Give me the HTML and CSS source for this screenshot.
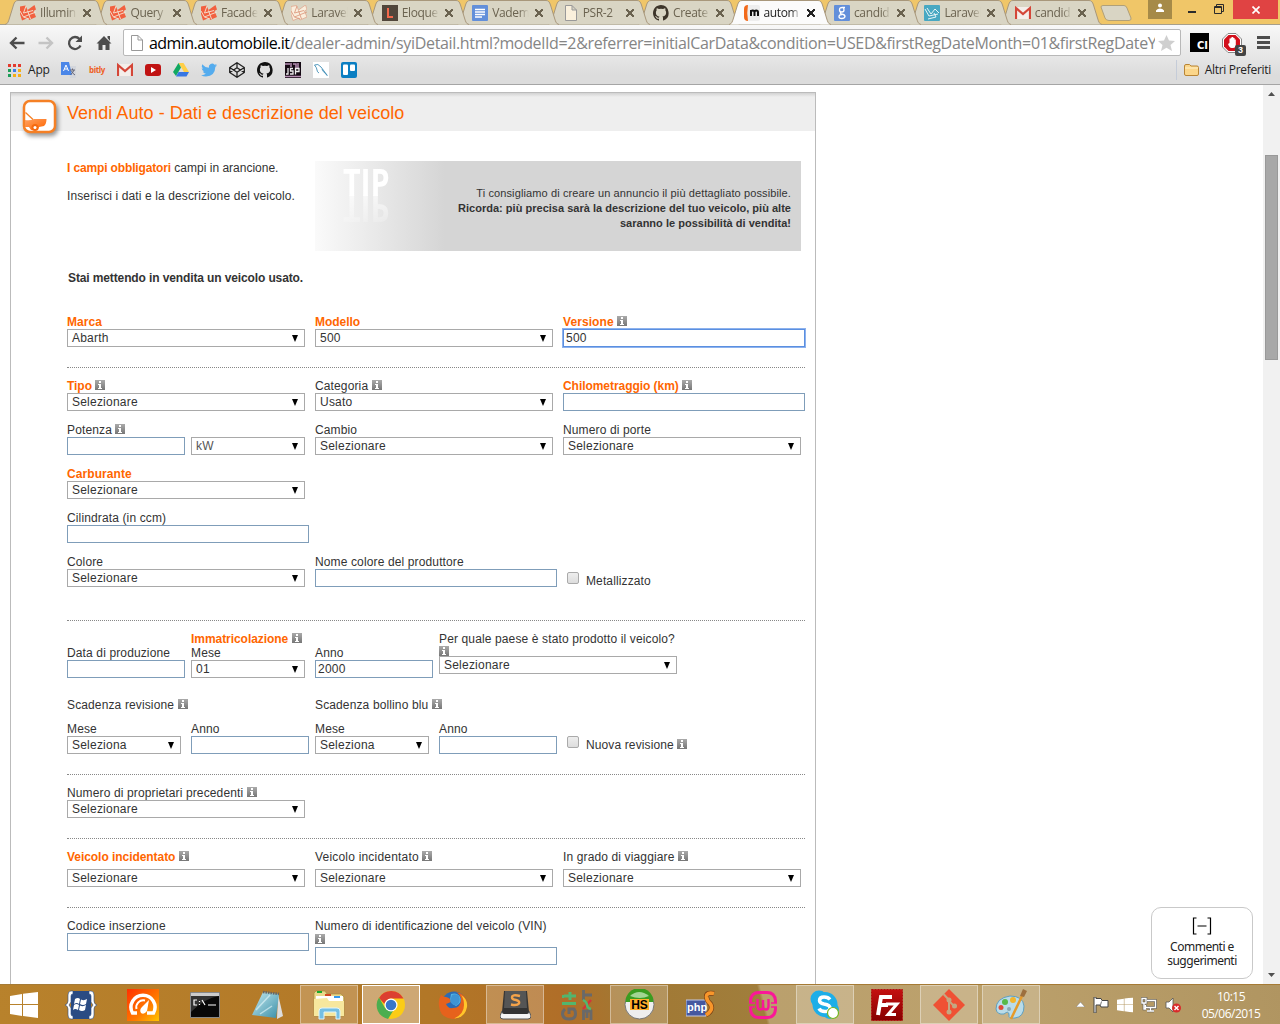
FILE: index.html
```html
<!DOCTYPE html>
<html lang="it">
<head>
<meta charset="utf-8">
<title>automobile.it - Vendi Auto</title>
<link rel="stylesheet" href="styles.css">
</head>
<body>
<svg class="defs" width="0" height="0">
  <defs>
    <linearGradient id="gi" x2="0" y2="1"><stop offset="0" stop-color="#aaa"/><stop offset="1" stop-color="#777"/></linearGradient>
    <linearGradient id="gcar" x2="1" y2="1"><stop offset="0" stop-color="#ffa060"/><stop offset="1" stop-color="#f60"/></linearGradient>
    <linearGradient id="ggauge" x2="1" y2="1"><stop offset="0" stop-color="#ff3000"/><stop offset=".6" stop-color="#ff7a00"/><stop offset="1" stop-color="#ffc400"/></linearGradient>
    <linearGradient id="gred" x2="0" y2="1"><stop offset="0" stop-color="#c41010"/><stop offset="1" stop-color="#860000"/></linearGradient>
    <linearGradient id="gnote" x2="1" y2="1"><stop offset="0" stop-color="#c5eaf0"/><stop offset="1" stop-color="#3a8fa8"/></linearGradient>
    <symbol id="tab" viewBox="0 0 102 25"><path d="M0 24.5C3 24 3.5 21 4.5 18L8.500 5C9.500 2 10.500.5 13 .5H89C91.500.5 92.500 2 93.500 5L97.500 18C98.500 21 99 24 102 24.500"/></symbol>
    <symbol id="info" viewBox="0 0 10 10"><path d="M0 0H10V10H0z" fill="url(#gi)"/><path d="M4 1H6V3H4zM3 4H6V8H7V9H3V8H4V5H3z" fill="#fff"/></symbol>
    <symbol id="laravel" viewBox="0 0 16 16"><path d="M0 1.500L5.500.500 7.500 5 14.500 0 16 4.500 13.500 6 16 12 9 15 8 13 2 15.500 0 9z" fill="currentColor"/><path d="M0 6L3.500 12 9.500 9.500 16 7M6 1L3.500 8 13 5.500M7.500 5.500L10.500 14M3.500 12L9 14" fill="none" stroke="#f4e6d6" stroke-width=".9"/></symbol>
    <symbol id="file" viewBox="0 0 12 16"><path d="M.5.5H7L11.500 5V15.500H.5zM7 .5V5H11.500" stroke="#999"/></symbol>
    <symbol id="github" viewBox="0 0 16 16"><path d="M8 0C3.600 0 0 3.600 0 8c0 3.500 2.300 6.500 5.500 7.600.4 0 .5-.2.5-.4v-1.500c-2.200.5-2.700-1-2.700-1-.4-.9-.9-1.200-.9-1.200-.7-.5.1-.5.100-.5.8.1 1.200.8 1.200.8.7 1.300 1.900.9 2.300.7.1-.5.3-.9.500-1.100-1.800-.2-3.600-.9-3.600-4 0-.9.3-1.600.8-2.100-.1-.2-.4-1 .1-2.100 0 0 .7-.2 2.200.8a7.500 7.500 0 0 1 4 0c1.500-1 2.200-.8 2.200-.8.4 1.100.2 1.900.1 2.100.5.600.8 1.300.8 2.100 0 3.100-1.900 3.700-3.700 3.900.3.300.6.800.6 1.500v2.200c0 .2.1.5.6.4A8 8 0 0 0 8 0z"/></symbol>
    <symbol id="gmail" viewBox="0 0 16 16"><path d="M0 2H16V14H0z" fill="#f4eeea"/><path d="M1 14V3L8 9 15 3V14" fill="none" stroke="#d44638" stroke-width="2.200"/></symbol>
    <symbol id="win" viewBox="0 0 28 26"><path d="M0 4L12 2V12H0zM13 1.800L28 0V12H13zM0 13H12V24L0 22zM13 13H28V26L13 24z"/></symbol>
  </defs>
</svg>

<header class="browser">
  <div class="tabstrip">
    <div class="tab t1"><svg class="shape"><use href="#tab"/></svg><svg class="fav red"><use href="#laravel"/></svg><span class="ttl">Illumin</span><i class="x"></i></div>
    <div class="tab t2"><svg class="shape"><use href="#tab"/></svg><svg class="fav red"><use href="#laravel"/></svg><span class="ttl">Query</span><i class="x"></i></div>
    <div class="tab t3"><svg class="shape"><use href="#tab"/></svg><svg class="fav red"><use href="#laravel"/></svg><span class="ttl">Facade</span><i class="x"></i></div>
    <div class="tab t4"><svg class="shape"><use href="#tab"/></svg><svg class="fav" viewBox="0 0 16 16"><path d="M0 1.500L5.500.500 7.500 5 14.500 0 16 4.500 13.500 6 16 12 9 15 8 13 2 15.500 0 9z" fill="#faeedd" stroke="#e0a78e" stroke-width=".8"/><path d="M0 6L3.500 12 9.500 9.500 16 7M6 1L3.500 8 13 5.500M7.500 5.500L10.500 14M3.500 12L9 14" fill="none" stroke="#dd9b80" stroke-width=".9"/></svg><span class="ttl">Laravel</span><i class="x"></i></div>
    <div class="tab t5"><svg class="shape"><use href="#tab"/></svg><svg class="fav" viewBox="0 0 16 16"><path d="M0 0H16V16H0z" fill="#51463b"/><path d="M6 3V12H11" fill="none" stroke="#f4694c" stroke-width="2"/></svg><span class="ttl">Eloque</span><i class="x"></i></div>
    <div class="tab t6"><svg class="shape"><use href="#tab"/></svg><svg class="fav" viewBox="0 0 16 16"><rect width="16" height="16" rx="1" fill="#628fda"/><path d="M3 4.500H13M3 7H13M3 9.500H13M3 12H10" stroke="#fff" stroke-width="1.300"/></svg><span class="ttl">Vadem</span><i class="x"></i></div>
    <div class="tab t7"><svg class="shape"><use href="#tab"/></svg><svg class="fav" fill="#faf0dc"><use href="#file"/></svg><span class="ttl">PSR-2</span><i class="x"></i></div>
    <div class="tab t8"><svg class="shape"><use href="#tab"/></svg><svg class="fav" fill="#3d352a"><use href="#github"/></svg><span class="ttl">Create</span><i class="x"></i></div>
    <div class="tab t9 active"><svg class="shape"><use href="#tab"/></svg><svg class="fav" viewBox="0 0 16 16"><rect x="3" width="13" height="16" rx="2" fill="#eee"/><path d="M4 0Q0 0 0 4V12Q0 16 4 16Q2.500 8 4 0z" fill="#f26a1b"/><path d="M7 11V5M7 7Q7 5.500 8.700 5.500 10.500 5.500 10.500 7V11M10.500 7Q10.500 5.500 12.200 5.500 14 5.500 14 7V11" fill="none" stroke="#111" stroke-width="2"/></svg><span class="ttl">autom</span><i class="x"></i></div>
    <div class="tab t10"><svg class="shape"><use href="#tab"/></svg><svg class="fav" viewBox="0 0 16 16"><rect width="16" height="16" rx="1" fill="#628fda"/><path d="M11 2.500H8.500Q5.500 2.500 5.500 5 5.500 7 7.800 7 10 7 10 5 10 3.500 9 2.600M7 7Q5.500 8.200 7.500 9 11 9.500 11 11.500 10.500 13.500 7.800 13.500 5 13.500 5 11.500 5.200 9.500 8 9.500" fill="none" stroke="#fff" stroke-width="1.300"/></svg><span class="ttl">candid</span><i class="x"></i></div>
    <div class="tab t11"><svg class="shape"><use href="#tab"/></svg><svg class="fav" viewBox="0 0 16 16"><rect width="16" height="16" rx="1" fill="#48a8c2"/><path d="M1 4L5 11 14 9M3 3L7 9 11 4 15 8M4 14L12 12 10 8" fill="none" stroke="#e8f5f8"/></svg><span class="ttl">Laravel</span><i class="x"></i></div>
    <div class="tab t12"><svg class="shape"><use href="#tab"/></svg><svg class="fav"><use href="#gmail"/></svg><span class="ttl">candid</span><i class="x"></i></div>
    <svg class="newtab" width="32" height="16" viewBox="0 0 32 16"><path d="M1 2Q1 .5 3 .5H24Q26 .5 27 3L31 13Q31.500 15.500 29 15.500H9Q6 15.500 5 13z" fill="#d9d5c4" stroke="#b0a078"/></svg>
    <div class="winbtns">
      <span class="user"><svg width="10" height="10" viewBox="0 0 10 10" fill="#fff"><circle cx="5" cy="2.500" r="2"/><path d="M1 9V7.500Q2.500 5.500 5 5.500T9 7.500V9z"/></svg></span>
      <svg class="mini" width="9" height="14"><path d="M0 11H8V13H0z" fill="#2b2b2b"/></svg>
      <svg class="rest" width="10" height="10" viewBox="0 0 10 10" fill="none" stroke="#2b2b2b"><path d="M.5 2.500H7.500V9.500H.5zM2.500 2V.5H9.500V7.500H8M.5 3.500H7.500"/></svg>
      <span class="close"><svg width="8" height="8" viewBox="0 0 8 8"><path d="M.5.5L7.500 7.500M7.500.5L.5 7.500" stroke="#fff" stroke-width="1.700"/></svg></span>
    </div>
  </div>
  <div class="toolbar">
    <svg class="nav" width="16" height="16" viewBox="0 0 16 16"><path d="M7.500 2.500L2 8 7.500 13.500M2 8H15.500" fill="none" stroke="#4d4d4d" stroke-width="2.400"/></svg>
    <svg class="nav" width="16" height="16" viewBox="0 0 16 16"><path d="M8.500 2.500L14 8 8.500 13.500M14 8H.5" fill="none" stroke="#c4c4c4" stroke-width="2.400"/></svg>
    <svg class="nav" width="16" height="16" viewBox="0 0 16 16"><path d="M13.500 10.500A6 6 0 1 1 12.500 4" fill="none" stroke="#4d4d4d" stroke-width="2.300"/><path d="M15 .5V7H8.500z" fill="#4d4d4d"/></svg>
    <svg class="nav" width="16" height="16" viewBox="0 0 16 16"><path d="M8 1L15.500 8.500H13.500V15H9.500V10H6.500V15H2.500V8.500H.5zM11.500 1H14V6L11.500 3z" fill="#4d4d4d"/></svg>
    <div class="omni"><svg width="12" height="16" fill="#fff"><use href="#file"/></svg><span class="url"><b>admin.automobile.it</b>/dealer-admin/syiDetail.html?modelId=2&amp;referrer=initialCarData&amp;condition=USED&amp;firstRegDateMonth=01&amp;firstRegDateY</span>
      <svg width="17" height="16" viewBox="0 0 17 16"><path d="M8.500 0L11 5.500 17 6 12.500 10 14 16 8.500 12.800 3 16 4.500 10 0 6 6 5.500z" fill="#cfcfcf"/></svg></div>
    <span class="ci">CI</span>
    <span class="abp"><svg width="20" height="20" viewBox="0 0 20 20"><path d="M6 .5H14L19.500 6V14L14 19.500H6L.5 14V6z" fill="#fff" stroke="#888"/><path d="M6.500 2H13.500L18 6.500V13.500L13.500 18H6.500L2 13.500V6.500z" fill="#d2101c"/><path d="M6 11L7.500 10V5.500H8.800V4.500H10V4H11.300V5H12.600V6.500H13.800V12Q13.500 15 11 15H9.500Q7.500 15 6 11z" fill="#fff"/></svg><em>3</em></span>
    <svg class="menu" width="13" height="13"><path d="M0 1.500H13M0 6.500H13M0 11.500H13" stroke="#4d4d4d" stroke-width="3"/></svg>
  </div>
  <div class="bookmarks">
    <svg width="13" height="13" viewBox="0 0 13 13"><path d="M0 0h3v3H0zM5 0h3v3H5z" fill="#e33b2e"/><path d="M10 0h3v3h-3z" fill="#e33b2e"/><path d="M0 5h3v3H0zM0 10h3v3H0z" fill="#1d9d58"/><path d="M5 5h3v3H5z" fill="#3d7ee8"/><path d="M10 5h3v3h-3zM5 10h3v3H5zM10 10h3v3h-3z" fill="#f5ae16"/></svg>
    <span class="app">App</span>
    <svg class="bk" viewBox="0 0 16 16"><path d="M7 4H15V16H9z" fill="#d3d6dc"/><path d="M0 0H8L11 13H0z" fill="#4a86e8"/><path d="M2.500 9L5 3 7.500 9M3.300 7H6.700" fill="none" stroke="#fff"/><path d="M9 8H14M11.500 6.500V8M13 8Q12 11 9.500 12.500M10.500 9Q12 12 14 13" fill="none" stroke="#667"/></svg>
    <span class="bitly">bitly</span>
    <svg class="bk" viewBox="0 0 16 16"><use href="#gmail"/></svg>
    <svg class="bk" viewBox="0 0 16 16"><rect y="2" width="16" height="12" rx="3" fill="#c01313"/><path d="M6 5L11 8 6 11z" fill="#fff"/></svg>
    <svg class="bk" viewBox="0 0 16 16"><path d="M5.500 1H10.500L16 10H11z" fill="#ffcf48"/><path d="M5.500 1L8 5.500 3 14 0 10z" fill="#11a861"/><path d="M5.500 10H16L13.500 14.500H3z" fill="#3777e3"/></svg>
    <svg class="bk" viewBox="0 0 16 16"><path d="M16 3.200Q15 3.600 14.200 3.700 15.300 3 15.600 1.900 14.600 2.500 13.500 2.700A3.300 3.300 0 0 0 7.900 5.700Q3.900 5.500 1.100 2.200 0 4.800 2.200 6.600 1.400 6.600.7 6.200.8 8.700 3.300 9.400 2.600 9.600 1.800 9.500 2.500 11.600 4.900 11.800 2.800 13.400 0 13.200 2.300 14.600 5 14.600 14 14.200 14.400 4.800 15.300 4.200 16 3.200z" fill="#55acee"/></svg>
    <svg class="bk" viewBox="0 0 16 16" fill="none" stroke="#222" stroke-width="1.300"><path d="M8 .7L15.300 5.500V10.500L8 15.300.7 10.500V5.500zM8 .7V5.800M8 15.300V10.200M.7 5.500L8 10.200 15.300 5.500M.7 10.500L8 5.800 15.300 10.500"/></svg>
    <svg class="bk" viewBox="0 0 16 16" fill="#111"><use href="#github"/></svg>
    <svg class="bk" viewBox="0 0 16 16"><path d="M0 0H16V16H0z" fill="#150a14"/><path d="M0 2H5M6 1V5M8 2H11V6M13 1V6M0 14.500H16" fill="none" stroke="#b78fb4" stroke-width="1.500"/><path d="M1 12H3V6M8 6.500H5.500V9H8V12H5M10.500 12.500V6.500H14V9.500H11" fill="none" stroke="#eee" stroke-width="1.300"/></svg>
    <svg class="bk" viewBox="0 0 16 16"><path d="M0 0H16V16H0z" fill="#fff"/><path d="M1.500 3Q5 1 8 5T14 13M1.500 3Q4 6 4 8T6 11M9 7Q10 10 12 11L14.500 14" fill="none" stroke="#3f8db5" stroke-width=".9"/></svg>
    <svg class="bk" viewBox="0 0 16 16"><rect width="16" height="16" rx="2" fill="#0a7ec2"/><rect x="2" y="2.500" width="5" height="10.500" rx="1" fill="#fff"/><rect x="9" y="2.500" width="5" height="6.500" rx="1" fill="#fff"/></svg>
    <span class="altri"><svg width="15" height="12" viewBox="0 0 15 12"><path d="M.5 2Q.5.5 2 .5H5.500L7 2H13Q14.500 2 14.500 3.500V10Q14.500 11.500 13 11.500H2Q.5 11.500.5 10z" fill="#fbd68a" stroke="#b98535"/><path d="M1 4H14" stroke="#fff0c8"/></svg>Altri Preferiti</span>
  </div>
</header>

<main class="viewport">
  <section class="panel">
    <div class="head">
      <svg class="logo" width="36" height="38" viewBox="0 0 36 38"><rect x="2" y="2" width="31" height="31" rx="6" fill="#fff" stroke="#f58025" stroke-width="2.500"/><path d="M3 21Q8 22 12 20H24.500Q24.500 25 22 27L17 28 16 31H9L7 28 3 28z" fill="url(#gcar)"/><path d="M3.500 13.500L11 20.500" stroke="#f58025" stroke-width="1.300"/><circle cx="13" cy="28.500" r="3.500" fill="#f56a10"/><circle cx="13" cy="28.500" r="1.500" fill="#fff"/></svg>
      <h1>Vendi Auto - Dati e descrizione del veicolo</h1>
    </div>
    <div class="content">
      <div class="intro">
        <div class="notes"><p><strong class="req tight">I campi obbligatori</strong> campi in arancione.</p><p class="wide">Inserisci i dati e la descrizione del veicolo.</p></div>
        <div class="tip">
          <div class="tipword"><span>TIP</span><span class="mirror">TIP</span></div>
          <p><span class="wide">Ti consigliamo di creare un annuncio il più dettagliato possibile.</span><br><strong>Ricorda: più precisa sarà la descrizione del tuo veicolo, più alte<br>saranno le possibilità di vendita!</strong></p>
        </div>
      </div>
      <p class="selling">Stai mettendo in vendita un veicolo usato.</p>

      <div class="row">
        <div class="f w2"><label class="req">Marca</label><div class="sel">Abarth</div></div>
        <div class="f w2"><label class="req tight">Modello</label><div class="sel">500</div></div>
        <div class="f w2"><label class="req">Versione <svg class="i"><use href="#info"/></svg></label><div class="inp focus">500</div></div>
      </div>
      <hr>
      <div class="row">
        <div class="f w2"><label class="req tight">Tipo <svg class="i"><use href="#info"/></svg></label><div class="sel">Selezionare</div></div>
        <div class="f w2"><label>Categoria <svg class="i"><use href="#info"/></svg></label><div class="sel">Usato</div></div>
        <div class="f w2"><label class="req tight">Chilometraggio (km) <svg class="i"><use href="#info"/></svg></label><div class="inp"></div></div>
      </div>
      <div class="row next">
        <div class="f"><label>Potenza <svg class="i"><use href="#info"/></svg></label><div class="inp"></div></div>
        <div class="f end"><div class="sel dim">kW</div></div>
        <div class="f w2"><label>Cambio</label><div class="sel">Selezionare</div></div>
        <div class="f w2"><label>Numero di porte</label><div class="sel">Selezionare</div></div>
      </div>
      <div class="row next"><div class="f w2"><label class="req">Carburante</label><div class="sel">Selezionare</div></div></div>
      <div class="row next"><div class="f w2"><label>Cilindrata (in ccm)</label><div class="inp"></div></div></div>
      <div class="row next">
        <div class="f w2"><label>Colore</label><div class="sel">Selezionare</div></div>
        <div class="f w2"><label>Nome colore del produttore</label><div class="inp"></div></div>
        <div class="f w2 check low"><i class="box"></i><span>Metallizzato</span></div>
      </div>
      <hr class="far">
      <div class="row">
        <div class="f end"><label>Data di produzione</label><div class="inp"></div></div>
        <div class="f"><label class="req tight">Immatricolazione <svg class="i"><use href="#info"/></svg></label><label>Mese</label><div class="sel">01</div></div>
        <div class="f end"><label>Anno</label><div class="inp">2000</div></div>
        <div class="f w2"><label>Per quale paese è stato prodotto il veicolo?</label><svg class="i own"><use href="#info"/></svg><div class="sel">Selezionare</div></div>
      </div>
      <div class="row caption">
        <label class="w2">Scadenza revisione <svg class="i"><use href="#info"/></svg></label>
        <label class="w2">Scadenza bollino blu <svg class="i"><use href="#info"/></svg></label>
      </div>
      <div class="row sub">
        <div class="f"><label>Mese</label><div class="sel">Seleziona</div></div>
        <div class="f"><label>Anno</label><div class="inp"></div></div>
        <div class="f"><label>Mese</label><div class="sel">Seleziona</div></div>
        <div class="f"><label>Anno</label><div class="inp"></div></div>
        <div class="f w2 check"><i class="box"></i><span>Nuova revisione <svg class="i"><use href="#info"/></svg></span></div>
      </div>
      <hr>
      <div class="row"><div class="f w2"><label>Numero di proprietari precedenti <svg class="i"><use href="#info"/></svg></label><div class="sel">Selezionare</div></div></div>
      <hr>
      <div class="row roomy">
        <div class="f w2"><label class="req tight">Veicolo incidentato <svg class="i"><use href="#info"/></svg></label><div class="sel">Selezionare</div></div>
        <div class="f w2"><label class="wider">Veicolo incidentato <svg class="i"><use href="#info"/></svg></label><div class="sel">Selezionare</div></div>
        <div class="f w2"><label>In grado di viaggiare <svg class="i"><use href="#info"/></svg></label><div class="sel">Selezionare</div></div>
      </div>
      <hr>
      <div class="row">
        <div class="f w2"><label class="wider">Codice inserzione</label><div class="inp"></div></div>
        <div class="f w2"><label>Numero di identificazione del veicolo (VIN)</label><svg class="i own vin"><use href="#info"/></svg><div class="inp"></div></div>
      </div>
    </div>
  </section>
  <aside class="feedback"><svg width="20" height="18" viewBox="0 0 20 18" fill="none" stroke="#000" stroke-width="1.200"><path d="M4.500 1H1.500V17H4.500M15.500 1H18.500V17H15.500M5.500 9H14.500"/></svg><span>Commenti e<br>suggerimenti</span></aside>
  <div class="scroll"><svg width="7" height="4"><path d="M0 4L3.500 0 7 4z" fill="#505050"/></svg><i></i><svg width="7" height="4"><path d="M0 0L3.500 4 7 0z" fill="#505050"/></svg></div>
</main>

<footer class="taskbar">
  <div class="start"><svg width="28" height="26" fill="#fff"><use href="#win"/></svg></div>
  <div class="task"><svg width="32" height="30" viewBox="0 0 32 30"><rect x="6" y="1" width="20" height="28" rx="2" fill="#2a4b83"/><path d="M8 1H6Q3 1 3 5V11Q3 14 0 15 3 16 3 19V25Q3 29 6 29H8V26Q6 26 6 24V18L4 15 6 12V6Q6 4 8 4zM24 1H26Q29 1 29 5V11Q29 14 32 15 29 16 29 19V25Q29 29 26 29H24V26Q26 26 26 24V18L28 15 26 12V6Q26 4 24 4z" fill="#fff" stroke="#2a4b83" stroke-width=".6"/><path d="M10 9Q13 7 15 9L14 14Q12 12 9 14zM16 9.500Q19 11 22 9L21 14Q18 16 15 14zM9 15Q11 13 14 15L13 20Q10 18 8 20zM15 15.500Q18 17 21 15L20 20Q17 22 14 20z" fill="#fff"/></svg></div>
  <div class="task"><svg width="32" height="32" viewBox="0 0 32 32"><path d="M0 0H32V32H0z" fill="url(#ggauge)"/><path d="M10 24H5.500A12 12 0 1 1 26.500 24H20" fill="none" stroke="#fff" stroke-width="3.500"/><path d="M9.500 20A7 7 0 0 1 18 11.500" fill="none" stroke="#fff" stroke-width="2"/><path d="M22 11L20 22Q17 26 14 24 12 21 15 18z" fill="#fff"/></svg></div>
  <div class="task"><svg width="30" height="26" viewBox="0 0 30 26"><path d="M.5.500H29.500V25.500H.5z" fill="#080808" stroke="#888"/><path d="M1 1H29V4H1z" fill="#ccc"/><path d="M1 4V20Q15 6 29 4z" fill="#333"/><path d="M7 8H4V13H7M9.500 9V10M9.500 12V13M12 8L15 13M18 13H26" fill="none" stroke="#fff" stroke-width="1.200"/></svg></div>
  <div class="task"><svg width="31" height="30" viewBox="0 0 31 30"><path d="M26 4L31 26 25 29z" fill="#ddd"/><path d="M11 2L27 4 24 28 0 25z" fill="url(#gnote)"/><path d="M11 2L27 4" stroke="#666" stroke-width="2.500" stroke-dasharray="1.500 1"/><path d="M4 20L18 5M8 24L20 16" stroke="#e9fafc" stroke-width="1.500" opacity=".6"/></svg></div>
  <div class="task open"><svg width="32" height="30" viewBox="0 0 32 30"><path d="M1 6V3L3 1H12L14 4H28L31 7V26H1z" fill="#ead88b" stroke="#a78e3d" stroke-width=".7"/><path d="M3 6H30V12H3z" fill="#fff"/><path d="M4 2H9" stroke="#18aa2b" stroke-width="2"/><path d="M12 5H18" stroke="#d34722" stroke-width="2"/><path d="M21 7H27" stroke="#3399ed" stroke-width="2"/><path d="M1 9L14 8 16 11H31V26H1z" fill="#f7e79d"/><path d="M6 29V21Q6 18 9 18H24Q27 18 27 21V29H23V22H11V29z" fill="#75bfe3" stroke="#dff4fd"/></svg></div>
  <div class="task open current"><svg width="30" height="30" viewBox="0 0 30 30"><circle cx="15" cy="15" r="14" fill="#fbcc16"/><path d="M3 8A14 14 0 0 1 27.500 8.500H15Q10 9 8.500 14z" fill="#dc3f30"/><path d="M3 7.500L9 18Q12 21 17 21L12 29A14 14 0 0 1 3 7.500z" fill="#4bae4f"/><circle cx="15" cy="15" r="6.500" fill="#fff"/><circle cx="15" cy="15" r="5.300" fill="#3976c8"/></svg></div>
  <div class="task"><svg width="30" height="30" viewBox="0 0 30 30"><circle cx="16" cy="14" r="12.500" fill="#2c6bb4"/><path d="M13 4Q19 2 22 7T18 16Q14 14 12 10z" fill="#54b6e5"/><path d="M3 5Q5 7 8 7 13 8 13 12L8 14Q10 19 15 18 23 18 23 9 22 4 18 2 29 4 29 15 28 28 15 29 2 28 1 16 0 10 3 5z" fill="#e6621c"/><path d="M12 11Q14 16 19 15 23 12 21 6 18 3 14 5z" fill="#3f94d4"/><path d="M23 5Q30 9 29 17 27 28 16 28.500 26 24 26 15 26 9 23 5z" fill="#ffc62a"/></svg></div>
  <div class="task open"><svg width="31" height="30" viewBox="0 0 31 30"><path d="M2 21L0 26Q0 29 3 29H28Q31 29 31 26L29 21z" fill="#f4f4f4" stroke="#555"/><path d="M4 1H27L29 22Q29 24 27 24H4Q2 24 2 22z" fill="#333"/><path d="M5 1H26L27 18H4z" fill="#555"/><path d="M20 6Q12 4 12 7.500 12 9.500 16 10 20 11 19 13.500 17 16 11 14.500" fill="none" stroke="#f4a249" stroke-width="2.400"/></svg></div>
  <div class="task"><svg width="32" height="32" viewBox="0 0 32 32" fill="none" stroke-width="3"><path d="M4 20Q1.500 22 1.500 25 2 30 8 30 14.500 30 14.500 25 14.500 22 13 20H8V25" stroke="#696969"/><path d="M1 14.500H15M3 7H15M9 3V11M1 7.500H3" stroke="#52b66e"/><path d="M22.500 31V22H30V31M26 29V22M22.500 11V1M22.500 6H31" stroke="#696969" stroke-width="2.800"/><path d="M30 11L22 20" stroke="#d4333b" stroke-width="2.500"/><path d="M22 11Q26 13 26 16T30 20" stroke="#52b66e" stroke-width="2.500"/></svg></div>
  <div class="task open"><svg width="31" height="31" viewBox="0 0 31 31"><circle cx="15.500" cy="15.500" r="14.500" fill="#eee" stroke="#777"/><path d="M1.500 13A14 14 0 0 1 29.500 13z" fill="#3a9c20"/><path d="M6 7Q15-1 25 7Q16 11 6 7z" fill="#a2d594"/><path d="M6 10H25V21H6z" fill="#ffae2b"/><text x="15.500" y="20" text-anchor="middle" class="hs">HS</text></svg></div>
  <div class="task"><svg width="30" height="30" viewBox="0 0 30 30"><path d="M0 10H20V26H0z" fill="#4558a0" stroke="#c3c9e3"/><text x="1" y="21" class="php">php</text><path d="M28 3.500Q20 2 20.500 7 21 11 24.500 14 28 20 20 25" fill="none" stroke="#7c4216" stroke-width="5"/><path d="M28 3.500Q20 2 20.500 7 21 11 24.500 14 28 20 20 25" fill="none" stroke="#f9962a" stroke-width="3.600"/></svg></div>
  <div class="task"><svg width="28" height="28" viewBox="0 0 28 28" fill="none" stroke="#fa1798"><path d="M1.500 12V10Q2 1.500 10 1.500H18Q26 1.500 26.500 10V12M1.500 16V18Q2 26.500 10 26.500H18Q26 26.500 26.500 18V16" stroke-width="3"/><path d="M0 12H6M22 12H28M0 16H6M22 16H28" stroke-width="1.500"/><path d="M8.500 8V15Q8.500 18.500 11 18.500 14 18.500 14 16V9M14 16Q14 18.500 17 18.500 19.500 18.500 19.500 15V8" stroke-width="2.400"/></svg></div>
  <div class="task open"><svg width="30" height="30" viewBox="0 0 30 30"><circle cx="9" cy="9" r="8.500" fill="#1daee8"/><circle cx="20" cy="20" r="9" fill="#1daee8"/><circle cx="15" cy="14.500" r="12.500" fill="#1daee8"/><path d="M20 9.500Q18 7 14 7 9.500 7 9.500 10.500 9.500 13 14 14 20 15 20 18 20 21.500 15 21.500 10.500 21.500 9 18.500" fill="none" stroke="#fff" stroke-width="3.500"/><circle cx="23" cy="23" r="5.500" fill="#fff" stroke="#75b51b" stroke-width="1.200"/></svg></div>
  <div class="task"><svg width="32" height="32" viewBox="0 0 32 32"><path d="M.5.5H31.500V31.500H.5z" fill="url(#gred)" stroke="#b01010" stroke-dasharray="2 1"/><path d="M7 26L10 8H21M9 16H17" fill="none" stroke="#fff" stroke-width="4"/><path d="M15 15H26L17 25.500H25" fill="none" stroke="#fff" stroke-width="3"/></svg></div>
  <div class="task open"><svg width="32" height="32" viewBox="0 0 32 32"><path d="M16 0L32 16 16 32 0 16z" fill="#ef5134"/><path d="M10.500 5L16 11V23M16 12L21 17" fill="none" stroke="#c4a782" stroke-width="2"/><g fill="#c4a782"><circle cx="16" cy="11" r="2.500"/><circle cx="16" cy="23" r="2.500"/><circle cx="21.500" cy="17" r="2.500"/></g></svg></div>
  <div class="task open"><svg width="32" height="32" viewBox="0 0 32 32"><path d="M15 7Q28 7 29 17 29 28 20 29 13 30 14 26 14 21 9 25 2 26 1 20 1 9 15 7z" fill="#b9dcea" stroke="#5e9fc0"/><circle cx="10" cy="13" r="3" fill="#56b949"/><circle cx="18" cy="11" r="3" fill="#f3b52d"/><circle cx="6" cy="18.500" r="2.500" fill="#df4a39"/><circle cx="14" cy="20" r="2" fill="#8aa8b4"/><path d="M27 7L16 30" stroke="#e69a29" stroke-width="2.500"/><path d="M28 0L32 2 29 8 25 7z" fill="#9d6f3d"/></svg></div>
  <div class="tray">
    <svg width="9" height="5"><path d="M0 5L4.500 0 9 5z" fill="#fff" stroke="#777" stroke-width=".5"/></svg>
    <svg width="16" height="16" viewBox="0 0 16 16"><path d="M1 0H3V1.500H8L9 3.500H15V10H8L7 8H3V16H1z" fill="#fff" stroke="#444"/><path d="M8.500 4.500L7.500 8" stroke="#777"/></svg>
    <svg width="16" height="16" viewBox="0 0 28 26" fill="#fff"><use href="#win"/></svg>
    <svg width="16" height="16" viewBox="0 0 16 16"><path d="M6 3.500H14.500V10.500H4.500V8M9.500 11V14M6 14H13M1 1.500H5V6H1zM3 6V12H5" fill="none" stroke="#555" stroke-width="2.600"/><path d="M6 3.500H14.500V10.500H4.500V8M9.500 11V14M6 14H13M1 1.500H5V6H1zM3 6V12H5" fill="none" stroke="#fff" stroke-width="1.400"/></svg>
    <svg width="16" height="16" viewBox="0 0 16 16"><path d="M1 5H4L8 1V15L4 11H1z" fill="#fff" stroke="#555" stroke-width=".8"/><circle cx="11.500" cy="11" r="4.500" fill="#d92a2a"/><path d="M9.500 9L13.500 13M13.500 9L9.500 13" stroke="#fff" stroke-width="1.400"/></svg>
    <div class="clock">10:15<br>05/06/2015</div>
  </div>
</footer>
</body>
</html>
```
FILE: styles.css
```css
* { box-sizing: border-box; }
html, body { margin: 0; height: 1024px; overflow: hidden; }
body { width: 1280px; display: flex; flex-direction: column; background: #fff; font: 12px/14px "Liberation Sans", Arial, sans-serif; color: #333; }
svg { display: block; flex: none; }
p, h1 { margin: 0; }
.defs { position: absolute; }

/* browser frame */
.browser { height: 85px; flex: none; border-bottom: 1px solid #a5a5a5; background: linear-gradient(#f8f8f8 25px, #dcdcdc 75px); font-family: "Open Sans", "Noto Sans", sans-serif; }
.tabstrip { height: 25px; padding-left: 5px; display: flex; background: #f0c668; border-bottom: 1px solid #a79f8a; isolation: isolate; }
.tab { position: relative; width: 90.45px; height: 25px; flex: none; display: flex; align-items: center; padding: 1px 0 0 15px; color: #6b6350; }
.shape { position: absolute; left: 0; top: 0; width: 102px; height: 25px; fill: #d9d5c4; stroke: #a8977b; z-index: -1; }
.t1 { z-index: 12; } .t2 { z-index: 11; } .t3 { z-index: 10; } .t4 { z-index: 9; } .t5 { z-index: 8; } .t6 { z-index: 7; }
.t7 { z-index: 6; } .t8 { z-index: 5; } .t10 { z-index: 3; } .t11 { z-index: 2; } .t12 { z-index: 1; }
.active { z-index: 20; color: #222; }
.active .shape { fill: #fbfbfb; }
.fav { width: 16px; height: 16px; margin-right: 4px; }
.red { color: #f2603f; }
.ttl { width: 40px; white-space: nowrap; font-size: 12px; line-height: 18px; letter-spacing: -.35px; -webkit-mask-image: linear-gradient(90deg, #000 68%, transparent 92%); mask-image: linear-gradient(90deg, #000 68%, transparent 92%); }
.x { width: 8px; height: 8px; margin-left: 3px; background: linear-gradient(45deg, transparent 42%, currentColor 42% 58%, transparent 58%), linear-gradient(-45deg, transparent 42%, currentColor 42% 58%, transparent 58%); }
.newtab { margin: 5px 0 0 10px; }
.winbtns { display: flex; margin-left: auto; align-items: flex-start; }
.user { width: 24px; height: 19px; background: #a68a48; display: flex; align-items: center; justify-content: center; padding-bottom: 3px; margin-right: 16px; }
.mini { margin-right: 17px; }
.rest { margin: 4px 9px 0 0; }
.close { width: 45px; height: 19px; margin-right: 2px; background: #e04343; display: flex; align-items: center; justify-content: center; }
.toolbar { height: 34px; display: flex; align-items: center; padding: 1px 9px 0 9px; }
.nav { margin-right: 13px; }
.nav:nth-child(4) { margin-right: 11px; }
.omni { width: 1058px; height: 27px; flex: none; border: 1px solid #b8b8b8; border-radius: 2px; background: #fff; display: flex; align-items: center; padding: 0 4px 0 7px; margin-right: 9px; }
.url { width: 1006px; margin: 0 3px 0 6px; overflow: hidden; white-space: nowrap; color: #858585; font-size: 16px; line-height: 24px; letter-spacing: -.34px; }
.url b { font-weight: 400; color: #000; letter-spacing: -.55px; }
.ci { width: 19px; height: 19px; flex: none; background: #000; color: #fff; font: bold 10px/25px "DejaVu Sans", sans-serif; text-align: right; padding-right: 1px; margin-right: 13px; }
.abp { position: relative; margin-right: 15px; }
.abp em { position: absolute; left: 13px; top: 12px; width: 11px; height: 11px; border-radius: 2px; background: #444; color: #fff; font: bold 9px/11px "Liberation Sans", sans-serif; text-align: center; }
.bookmarks { height: 25px; display: flex; align-items: center; padding: 0 9px 3px 8px; }
.app { font-size: 12px; color: #222; width: 33px; margin-left: 7px; letter-spacing: -.2px; }
.bk { width: 16px; height: 16px; margin-right: 12px; }
.bitly { width: 17px; margin-right: 11px; font: bold 8px/14px "Open Sans", sans-serif; letter-spacing: -.4px; color: #ee6123; }
.altri { display: flex; align-items: center; gap: 6px; margin-left: auto; border-left: 1px solid #c5ccd8; padding-left: 7px; height: 20px; color: #222; font-size: 12px; letter-spacing: -.3px; white-space: nowrap; }

/* page */
.viewport { height: 899px; flex: none; position: relative; display: flex; justify-content: space-between; overflow: hidden; padding-left: 10px; }
.panel { width: 806px; height: 900px; margin-top: 7px; border: 1px solid #bbb; }
.head { height: 38px; display: flex; background: linear-gradient(#d2d2d2, #eee 4px); padding-left: 11px; }
.logo { margin-top: 6px; filter: drop-shadow(2px 3px 2px rgba(0,0,0,.4)); }
h1 { font-size: 18px; line-height: 22px; font-weight: 400; color: #f60; margin: 9px 0 0 9px; letter-spacing: .05px; }
.content { padding: 30px 10px 0 56px; }
.intro { display: flex; }
.notes { width: 248px; }
.notes p { margin-bottom: 14px; }
.wide { letter-spacing: .115px; }
.req { color: #f60; font-weight: 700; }
.row label.req { letter-spacing: .08px; }
.tight, .row label.tight { letter-spacing: -.05px; }
.notes .tight { letter-spacing: -.14px; }
.tip { width: 486px; height: 90px; display: flex; justify-content: space-between; background: linear-gradient(90deg, #fafafa, #d5d5d5 130px); }
.tip > p { font-size: 11px; line-height: 15px; padding: 25px 10px 0 0; text-align: right; white-space: nowrap; }
.tip strong { letter-spacing: .015px; }
.tipword { display: flex; flex-direction: column; margin-left: 28px; padding-top: 4px; color: #fff; font: 700 37px/33px "Open Sans", sans-serif; }
.tipword span { transform: scaleX(.82); transform-origin: left; height: 29px; }
.tipword .mirror { transform: scale(.82, -1); -webkit-mask-image: linear-gradient(rgba(0,0,0,.12), rgba(0,0,0,.65)); mask-image: linear-gradient(rgba(0,0,0,.12), rgba(0,0,0,.65)); height: 32px; }
.selling { font-weight: 700; margin: 20px 0 30px 1px; letter-spacing: -.12px; }
.row { display: grid; grid-template-columns: repeat(6, 114px); column-gap: 10px; }
.next { margin-top: 12px; }
.w2 { grid-column: span 2; }
.f { display: flex; flex-direction: column; white-space: nowrap; letter-spacing: .12px; }
.end { justify-content: flex-end; }
.row label { display: block; height: 14px; white-space: nowrap; letter-spacing: .13px; }
.row label.wider { letter-spacing: .2px; }
.i { width: 10px; height: 10px; display: inline-block; vertical-align: 0; }
.own { display: block; margin-top: -.01px; }
.sel, .inp { height: 18px; border: 1px solid #a9a9a9; background: #fff; line-height: 16px; padding-left: 4px; letter-spacing: .22px; }
.sel { display: flex; justify-content: space-between; align-items: center; padding-right: 6px; }
.sel::after { content: ""; border: 3.5px solid transparent; border-top: 7px solid #000; border-bottom: 0; }
.w2 > .sel { width: 238px; }
.inp { width: 118px; border-color: #7f9db9; padding-left: 2px; }
.w2 > .inp { width: 242px; }
.focus { border-color: #5b8fe0; box-shadow: 0 0 0 1px #8db2ee; }
.dim { color: #555; }
hr { width: 738px; margin: 20px 0 11px; border: 0; border-top: 1px dotted #888; }
hr.far { margin-top: 32px; }
.check { flex-direction: row; align-items: flex-start; gap: 7px; padding: 14px 0 0 4px; }
.check span { margin-top: 2px; }
.low { padding-top: 17px; }
.box { width: 12px; height: 12px; border: 1px solid #aaa; border-radius: 2px; background: linear-gradient(#eee, #ddd); }
.caption { margin-top: 20px; }
.sub { margin-top: 10px; }
.roomy label { margin-bottom: 5px; }
.vin { margin: 1px 0 3px; }
.feedback { position: absolute; left: 1151px; top: 822px; width: 102px; height: 72px; border: 1px solid #c9c9c9; border-radius: 10px; background: #fff; color: #222; display: flex; flex-direction: column; align-items: center; padding-top: 9px; gap: 5px; text-align: center; font: 12px/14px "Noto Sans", sans-serif; letter-spacing: -.5px; white-space: nowrap; }
.scroll { width: 17px; background: #f1f1f1; display: flex; flex-direction: column; align-items: center; padding: 7px 0; }
.scroll i { width: 13px; height: 205px; margin: 59px 0 auto; background: #a8a8a8; border: 1px solid #999; }

/* taskbar */
.taskbar { height: 40px; flex: none; display: flex; gap: 4px; background: linear-gradient(75deg, #b8822c, #b27727 420px, #b06e28 550px, #a27833 610px, #a07e3c 741px, #baa06d 744px, #bca16c 950px, #b09561); border-top: 1px solid #a67b35; }
.start { width: 48px; display: flex; align-items: center; justify-content: center; }
.task { width: 58px; height: 39px; flex: none; display: flex; align-items: center; justify-content: center; }
.open { background: rgba(255,255,255,.2); border: 1px solid rgba(255,255,255,.38); }
.current { background: rgba(255,255,255,.36); border-color: #fff; }
.hs { font: bold 12px "Liberation Sans", sans-serif; }
.php { font: bold 11px "Liberation Sans", sans-serif; fill: #fff; }
.tray { display: flex; align-items: center; gap: 8px; margin-left: auto; padding-right: 18px; }
.clock { width: 62px; margin-left: 11px; text-align: center; color: #fff; font: 12px/17px "Open Sans", sans-serif; letter-spacing: -.5px; white-space: nowrap; }
```
